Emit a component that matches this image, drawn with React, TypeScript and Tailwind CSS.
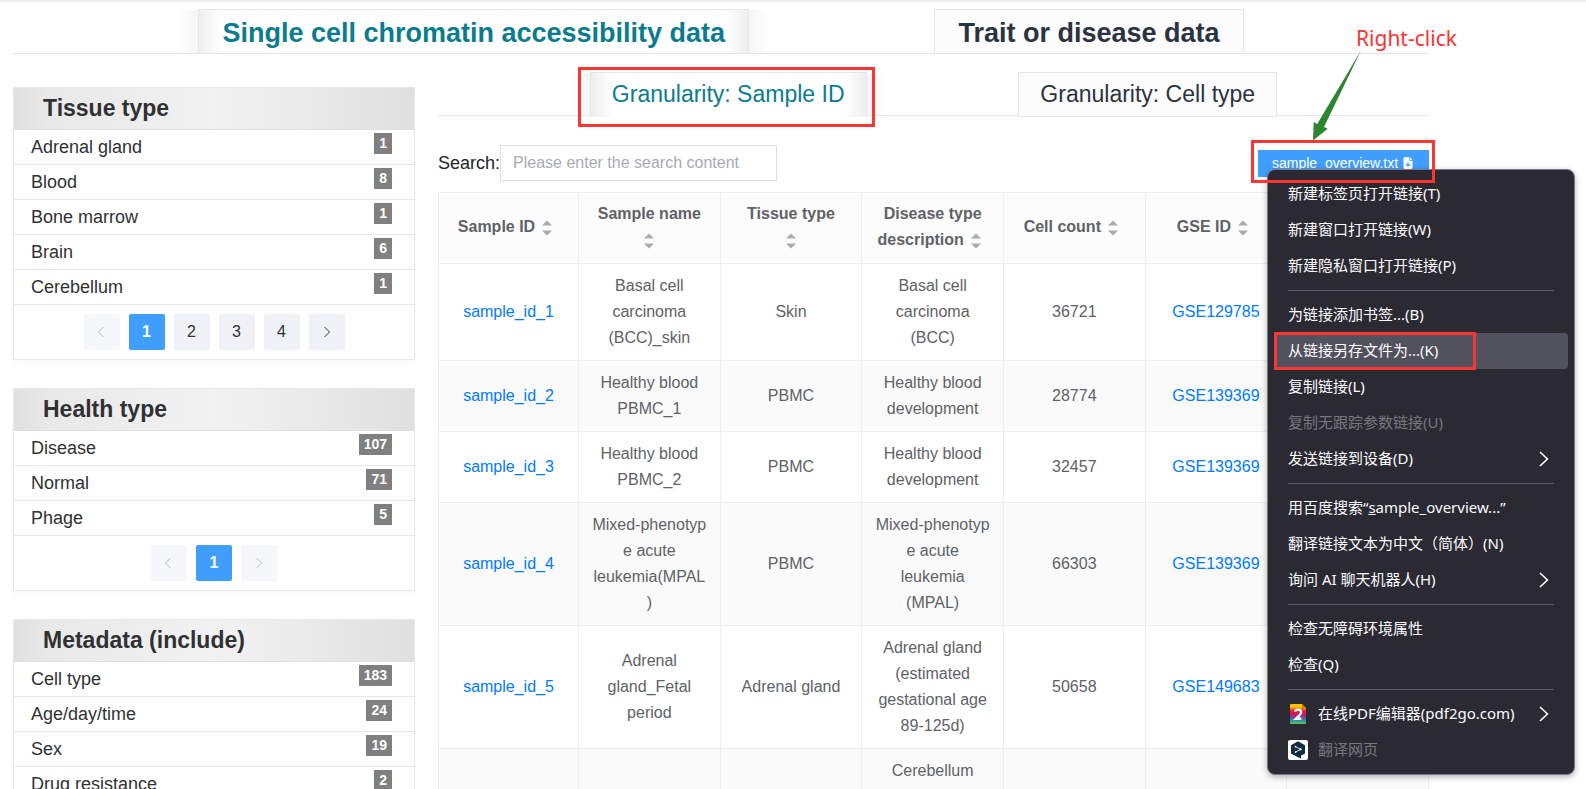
import { Fragment, type ReactNode } from "react";
import { FaFileArrowDown } from "react-icons/fa6";

type Facet = { label: string; count: number };

const tissue: Facet[] = [
  { label: "Adrenal gland", count: 1 },
  { label: "Blood", count: 8 },
  { label: "Bone marrow", count: 1 },
  { label: "Brain", count: 6 },
  { label: "Cerebellum", count: 1 },
];

const health: Facet[] = [
  { label: "Disease", count: 107 },
  { label: "Normal", count: 71 },
  { label: "Phage", count: 5 },
];

const metadata: Facet[] = [
  { label: "Cell type", count: 183 },
  { label: "Age/day/time", count: 24 },
  { label: "Sex", count: 19 },
  { label: "Drug resistance", count: 2 },
];

const columns = [
  "Sample ID",
  "Sample name",
  "Tissue type",
  "Disease type description",
  "Cell count",
  "GSE ID",
  "",
];

// A long hyphenated word fills its line instead of breaking at the hyphen.
const mixed = <span className="break-all">Mixed-phenotype</span>;

const rows: ReactNode[][] = [
  ["sample_id_1", "Basal cell carcinoma (BCC)_skin", "Skin", "Basal cell carcinoma (BCC)", "36721", "GSE129785"],
  ["sample_id_2", "Healthy blood PBMC_1", "PBMC", "Healthy blood development", "28774", "GSE139369"],
  ["sample_id_3", "Healthy blood PBMC_2", "PBMC", "Healthy blood development", "32457", "GSE139369"],
  ["sample_id_4", <>{mixed} acute leukemia(MPAL)</>, "PBMC", <>{mixed} acute leukemia (MPAL)</>, "66303", "GSE139369"],
  ["sample_id_5", "Adrenal gland_Fetal period", "Adrenal gland", "Adrenal gland (estimated gestational age 89-125d)", "50658", "GSE149683"],
  ["", "", "", "Cerebellum", "", ""],
];

function Tab({ active, size, children }: { active?: boolean; size: "lg" | "md"; children: ReactNode }) {
  const sizing =
    size === "lg"
      ? "-mb-px px-[23px] pt-[2px] text-[27px] leading-10 font-bold"
      : "-mb-[2px] px-[21px] pb-[2px] text-[23px] leading-10";
  const state = active
    ? "bg-[linear-gradient(to_right,#eeeeee,#fff_22px,#fff_calc(100%-22px),#eeeeee)] text-[#0b7c8e] before:absolute before:inset-y-0 before:-left-[21px] before:w-5 before:bg-linear-to-l before:from-[#f5f5f5] before:to-transparent after:absolute after:inset-y-0 after:-right-[21px] after:w-5 after:bg-linear-to-r after:from-[#f5f5f5] after:to-transparent"
    : "bg-[#fcfcfd] text-[#2c3340]";
  const edge = active && size === "md" ? "border-b-0" : "";
  return (
    <button
      type="button"
      role="tab"
      aria-selected={!!active}
      className={`relative h-[45px] border border-[#e4e6ee] whitespace-nowrap ${sizing} ${state} ${edge}`}
    >
      {children}
    </button>
  );
}

function Chevron({ left }: { left?: boolean }) {
  return (
    <svg width="8" height="12" viewBox="0 0 8 12" fill="none" stroke="currentColor" strokeWidth="1" aria-hidden="true">
      <path d={left ? "M5.5 1 .5 6l5 5" : "M1.5 1l5 5-5 5"} />
    </svg>
  );
}

function Pager({ pages }: { pages: number }) {
  const base = "flex size-9 items-center justify-center rounded-[2px] text-base";
  const off = "bg-[#f5f7fb] text-[#b4b7bf]";
  const on = "bg-[#f0f1f6] text-[#303133]";
  return (
    <nav aria-label="Pages" className="flex justify-center gap-[9px] py-[9px]">
      <button type="button" aria-label="Previous" disabled className={`${base} ${off}`}>
        <Chevron left />
      </button>
      {Array.from({ length: pages }, (_, i) => (
        <button key={i} type="button" className={`${base} ${i === 0 ? "bg-[#409eff] font-bold text-white" : on}`}>
          {i + 1}
        </button>
      ))}
      <button type="button" aria-label="Next" disabled={pages === 1} className={`${base} ${pages === 1 ? off : on}`}>
        <Chevron />
      </button>
    </nav>
  );
}

function FacetCard({ title, items, pages }: { title: string; items: Facet[]; pages: number }) {
  return (
    <section className="border border-[#e4e7ed] bg-white shadow-[0_6px_10px_rgba(0,0,0,0.02)]">
      <h2 className="border-b border-[#dedfe3] bg-[linear-gradient(to_right,#e0e0e0,#e8e8e8_8%,#f2f2f2_50%,#e0e0e0)] pl-[29px] text-[23px] leading-[41px] font-bold text-[#303133]">
        {title}
      </h2>
      <ul>
        {items.map((f) => (
          <li key={f.label} className="flex h-[35px] justify-between border-b border-[#e4e4ed] pr-[22px] pl-[17px]">
            <a href="#facet" className="text-lg leading-[34px] text-[#303133]">{f.label}</a>
            <span className="mt-[3px] h-[21px] bg-[#808080] px-[5px] text-sm leading-5 font-bold text-white">{f.count}</span>
          </li>
        ))}
      </ul>
      <Pager pages={pages} />
    </section>
  );
}

function SortIcon() {
  return (
    <span className="inline-flex w-6 justify-center align-middle">
      <svg width="10" height="16" viewBox="0 0 10 16" fill="#a8abb2" aria-hidden="true">
        <path d="M0 5.5 5 .5l5 5zM0 10.5h10l-5 5z" />
      </svg>
    </span>
  );
}

function SampleTable() {
  return (
    <table className="mt-[11px] w-full table-fixed border-separate border-spacing-0 border-t border-l border-[#ebeef5] text-center text-base leading-[26px] text-[#606266]">
      <colgroup>
        <col className="w-[140px]" />
        <col span={6} />
      </colgroup>
      <thead>
        <tr className="bg-[#fcfcfd]">
          {columns.map((c, i) => (
            <th key={i} className="border-r border-b border-[#ebeef5] px-[15px] pt-2 pb-[10px] font-bold">
              {c}
              {c && <SortIcon />}
            </th>
          ))}
        </tr>
      </thead>
      <tbody>
        {rows.map((r, i) => (
          <tr key={i} className="even:bg-[#fafafa]">
            {columns.map((_, j) => (
              <td key={j} className="border-r border-b border-[#ebeef5] px-[13px] py-[9px] wrap-break-word">
                {j === 0 || j === 5 ? (
                  <a href="#detail" className="text-[#007bff]">{r[j]}</a>
                ) : (
                  r[j]
                )}
              </td>
            ))}
          </tr>
        ))}
      </tbody>
    </table>
  );
}

function PdfIcon() {
  return (
    <svg width="20" height="20" viewBox="0 0 20 20" aria-hidden="true">
      <defs>
        <linearGradient id="pdf-bands" x1="0" y1="0" x2="0" y2="1">
          <stop offset="0.16" stopColor="#fcc200" />
          <stop offset="0.2" stopColor="#f08a1c" />
          <stop offset="0.34" stopColor="#e6202e" />
          <stop offset="0.5" stopColor="#d4145a" />
          <stop offset="0.66" stopColor="#7b3fa0" />
          <stop offset="0.82" stopColor="#2b8fc0" />
          <stop offset="0.86" stopColor="#23a889" />
          <stop offset="1" stopColor="#7cc04b" />
        </linearGradient>
      </defs>
      <path d="M2 1Q2 0 3 0h11l4 4v15q0 1-1 1H3q-1 0-1-1z" fill="url(#pdf-bands)" />
      <path d="M14 0l4 4h-4z" fill="#b8860b" />
      <path d="M7 7.6Q7.6 5.6 10 5.6q3.1 0 3.1 2.7 0 1.6-2 3.4L8 14.7h5.4" fill="none" stroke="#fff" strokeWidth="2.4" />
    </svg>
  );
}

function TranslateIcon() {
  return (
    <svg width="20" height="20" viewBox="0 0 20 20" aria-hidden="true">
      <rect width="20" height="20" rx="2" fill="#fff" />
      <path d="M10 1.3 17 5.2v8.2l-4 2.3v2.9l-3-1.4-7-3.8V5.2z" fill="#0f2b46" />
      <path d="M7.6 6.8 12.6 9.4 7.6 12" fill="none" stroke="#fff" strokeWidth="0.8" />
      <g fill="#fff">
        <circle cx="7.6" cy="6.7" r="0.9" />
        <circle cx="12.6" cy="9.4" r="1.1" />
        <circle cx="7.6" cy="12.1" r="0.9" />
      </g>
    </svg>
  );
}

type Entry = {
  text: ReactNode;
  submenu?: boolean;
  disabled?: boolean;
  hovered?: boolean;
  icon?: ReactNode;
};

const groups: Entry[][] = [
  [{ text: "新建标签页打开链接(T)" }, { text: "新建窗口打开链接(W)" }, { text: "新建隐私窗口打开链接(P)" }],
  [
    { text: "为链接添加书签...(B)" },
    { text: "从链接另存文件为...(K)", hovered: true },
    { text: "复制链接(L)" },
    { text: "复制无跟踪参数链接(U)", disabled: true },
    { text: "发送链接到设备(D)", submenu: true },
  ],
  [
    { text: <>用百度搜索“<u>s</u>ample_overview...”</> },
    { text: "翻译链接文本为中文（简体）(N)" },
    { text: "询问 AI 聊天机器人(H)", submenu: true },
  ],
  [{ text: "检查无障碍环境属性" }, { text: "检查(Q)" }],
  [
    { text: "在线PDF编辑器(pdf2go.com)", submenu: true, icon: <PdfIcon /> },
    { text: "翻译网页", disabled: true, icon: <TranslateIcon /> },
  ],
];

function ContextMenu() {
  return (
    <div
      role="menu"
      className="absolute top-[19px] left-[9px] w-[308px] rounded-lg border border-[#7b7a86] bg-[#2b2a33] p-[6px] font-['Noto_Sans','Noto_Sans_CJK_SC',sans-serif] text-[15px] text-[#fbfbfe] shadow-[0_2px_6px_rgba(0,0,0,0.3)]"
    >
      {groups.map((g, i) => (
        <Fragment key={i}>
          {i > 0 && <hr className="mx-[14px] my-[6px] border-[#5b5a66]" />}
          {g.map((e, j) => (
            <button
              key={j}
              type="button"
              role="menuitem"
              disabled={e.disabled}
              className={`relative flex h-9 w-full items-center gap-[10px] rounded px-[14px] text-left whitespace-nowrap ${e.hovered ? "bg-[#52525e]" : ""} ${e.disabled ? "text-[#77767d]" : ""}`}
            >
              {e.icon}
              <span>{e.text}</span>
              {e.submenu && (
                <svg className="mr-[5px] ml-auto" width="10" height="16" viewBox="0 0 10 16" fill="none" stroke="currentColor" strokeWidth="1.6" aria-hidden="true">
                  <path d="M1 1l7.4 7L1 15" />
                </svg>
              )}
              {e.hovered && <span className="absolute -inset-y-px left-0 w-[202px] border-3 border-[#fb3434]" />}
            </button>
          ))}
        </Fragment>
      ))}
    </div>
  );
}

function Download() {
  return (
    <div className="relative">
      <a href="#sample_overview.txt" className="flex h-[27px] w-[171px] items-center bg-[#409eff] pl-[14px] text-sm whitespace-nowrap text-white">
        <span>sample_overview.txt</span>
        <FaFileArrowDown className="ml-1 size-3" />
      </a>
      <ContextMenu />
      <div className="absolute -top-[10px] -left-[7px] h-[43px] w-[184px] border-3 border-[#fb3434]" />
      <svg className="absolute -top-[100px] left-[54px]" width="50" height="91" viewBox="0 0 50 91" fill="#2e8530" aria-hidden="true">
        <path d="M49 0.5 5.2 74 1.7 72 1 90.5 15.7 78.8 12 77z" />
      </svg>
      <p className="absolute -top-[126px] left-[98px] font-['Noto_Sans',sans-serif] text-[21px] leading-7 whitespace-nowrap text-[#fb3434]">
        Right-click
      </p>
    </div>
  );
}

export default function App() {
  return (
    <div className="h-screen overflow-hidden bg-white pr-[157px] pl-[13px] font-['Liberation_Sans',Arial,sans-serif] shadow-[inset_0_5px_4px_-4px_rgba(0,0,0,0.1)]">
      <div role="tablist" className="flex justify-evenly border-b border-[#e4e6ee] pt-[9px]">
        <Tab size="lg" active>Single cell chromatin accessibility data</Tab>
        <Tab size="lg">Trait or disease data</Tab>
      </div>
      <div className="grid grid-cols-[402fr_991fr] gap-x-[23px] pt-[18px]">
        <aside className="flex flex-col gap-7 pt-[15px]">
          <FacetCard title="Tissue type" items={tissue} pages={4} />
          <FacetCard title="Health type" items={health} pages={1} />
          <FacetCard title="Metadata (include)" items={metadata} pages={1} />
        </aside>
        <main className="min-w-0">
          <div role="tablist" className="flex justify-evenly border-b border-[#e4e6ee]">
            <div className="relative flex">
              <Tab size="md" active>Granularity: Sample ID</Tab>
              <div className="absolute -top-[5px] -right-2 -bottom-[12px] -left-3 border-3 border-[#fb3434]" />
            </div>
            <Tab size="md">Granularity: Cell type</Tab>
          </div>
          <div className="mt-[29px] flex items-center justify-between">
            <div className="flex items-center">
              <label htmlFor="search" className="text-lg text-[#212529]">Search:</label>
              <input
                id="search"
                type="text"
                placeholder="Please enter the search content"
                className="h-9 w-[277px] border border-[#dcdfe6] px-3 text-base placeholder:text-[#a8abb2]"
              />
            </div>
            <Download />
          </div>
          <SampleTable />
        </main>
      </div>
    </div>
  );
}
